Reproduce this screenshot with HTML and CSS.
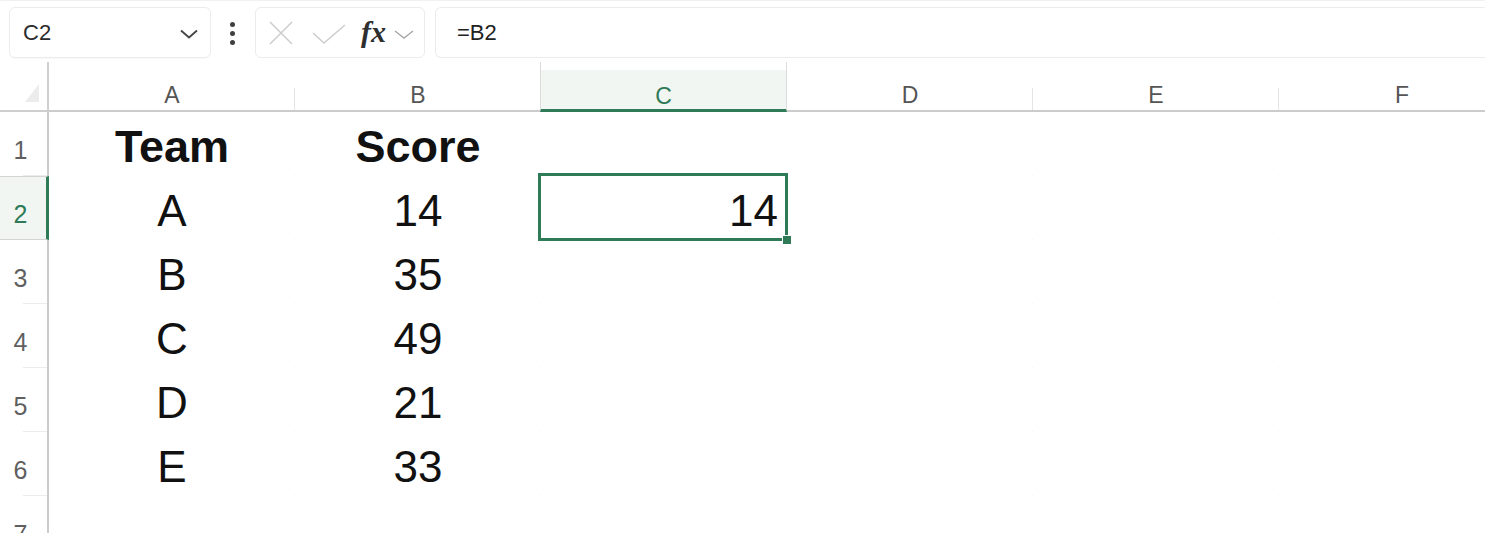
FILE: index.html
```html
<!DOCTYPE html>
<html lang="en">
<head>
<meta charset="utf-8">
<title>Sheet</title>
<link rel="stylesheet" href="styles.css">
</head>
<body>
<div class="app">
  <div class="toolbar">
    <div class="namebox">
      <span class="name">C2</span>
      <svg class="chev" width="18" height="10" viewBox="0 0 18 10"><path d="M1 1.5 L9 8.5 L17 1.5" fill="none" stroke="#444" stroke-width="1.8"/></svg>
    </div>
    <div class="more"><span class="dot"></span><span class="dot"></span><span class="dot"></span></div>
    <div class="fbtns">
      <svg class="ico-x" width="24" height="24" viewBox="0 0 24 24"><path d="M1 1 L23 23 M23 1 L1 23" fill="none" stroke="#cdcdcd" stroke-width="1.5"/></svg>
      <svg class="ico-check" width="34" height="20" viewBox="0 0 34 20"><path d="M1 9 L12 19 L33 1" fill="none" stroke="#cdcdcd" stroke-width="1.5"/></svg>
      <span class="fx">fx</span>
      <svg class="chev-s" width="20" height="9" viewBox="0 0 20 9"><path d="M1 1 L10 8 L19 1" fill="none" stroke="#a8a8a8" stroke-width="1.4"/></svg>
    </div>
    <div class="formula">=B2</div>
  </div>

  <div class="grid">
    <div class="corner"><span class="tri"></span></div>
    <div class="ch">A</div>
    <div class="ch">B</div>
    <div class="ch ch-sel">C</div>
    <div class="ch">D</div>
    <div class="ch">E</div>
    <div class="ch">F</div>

    <div class="rh">1</div>
    <div class="c c-b">Team</div>
    <div class="c c-b">Score</div>
    <div class="c"></div><div class="c"></div><div class="c"></div><div class="c"></div>

    <div class="rh rh-sel">2</div>
    <div class="c">A</div>
    <div class="c">14</div>
    <div class="c c-r active">14<span class="sel"><span class="handle"></span></span></div>
    <div class="c"></div><div class="c"></div><div class="c"></div>

    <div class="rh">3</div>
    <div class="c">B</div>
    <div class="c">35</div>
    <div class="c"></div><div class="c"></div><div class="c"></div><div class="c"></div>

    <div class="rh">4</div>
    <div class="c">C</div>
    <div class="c">49</div>
    <div class="c"></div><div class="c"></div><div class="c"></div><div class="c"></div>

    <div class="rh">5</div>
    <div class="c">D</div>
    <div class="c">21</div>
    <div class="c"></div><div class="c"></div><div class="c"></div><div class="c"></div>

    <div class="rh">6</div>
    <div class="c">E</div>
    <div class="c">33</div>
    <div class="c"></div><div class="c"></div><div class="c"></div><div class="c"></div>

    <div class="rh">7</div>
    <div class="c"></div><div class="c"></div><div class="c"></div><div class="c"></div><div class="c"></div><div class="c"></div>
  </div>
</div>
</body>
</html>
```

FILE: styles.css
```css
html, body {
  margin: 0;
  padding: 0;
  background: #ffffff;
  overflow: hidden;
}
body {
  width: 1485px;
  height: 533px;
  font-family: "Liberation Sans", Arial, sans-serif;
}
.app {
  width: 1485px;
  height: 533px;
  overflow: hidden;
}

/* toolbar */
.toolbar {
  height: 62px;
  box-sizing: border-box;
  padding: 7px 0 0 9px;
  display: flex;
  align-items: flex-start;
  border-top: 1px solid #f3f0f1;
}
.namebox {
  width: 202px;
  height: 51px;
  box-sizing: border-box;
  border: 1px solid #ececec;
  border-radius: 6px;
  display: flex;
  align-items: center;
  padding-left: 13px;
  margin-top: -1px;
  box-shadow: 0 1px 1px rgba(0,0,0,0.03);
}
.name {
  font-size: 22px;
  color: #2b2b2b;
  flex: 1;
}
.chev {
  margin-right: 12px;
  margin-top: 2px;
}
.more {
  width: 42px;
  height: 50px;
  display: flex;
  flex-direction: column;
  align-items: center;
  justify-content: center;
  gap: 4px;
}
.dot {
  width: 5px;
  height: 5px;
  border-radius: 50%;
  background: #3f3f3f;
}
.fbtns {
  width: 170px;
  height: 51px;
  box-sizing: border-box;
  border: 1px solid #ececec;
  border-radius: 6px;
  display: flex;
  align-items: center;
  padding-left: 13px;
  margin-top: -1px;
  margin-left: 2px;
}
.ico-x { margin-right: 19px; }
.ico-check { margin-right: 15px; margin-top: 2px; }
.fx {
  font-family: "Liberation Serif", "Times New Roman", serif;
  font-style: italic;
  font-weight: bold;
  font-size: 30px;
  color: #2e2e2e;
  margin-right: 8px;
  line-height: 1;
  margin-top: -2px;
}
.chev-s { margin-top: 3px; }
.formula {
  flex: 1;
  height: 51px;
  box-sizing: border-box;
  margin-left: 10px;
  margin-top: -1px;
  border: 1px solid #ececec;
  border-right: none;
  border-radius: 6px 0 0 6px;
  font-size: 22px;
  color: #222222;
  padding-left: 21px;
  display: flex;
  align-items: center;
}

/* grid */
.grid {
  display: grid;
  grid-template-columns: 49px repeat(6, 246px);
  grid-template-rows: 50px repeat(7, 64px);
}
.corner {
  box-sizing: border-box;
  border-right: 2px solid #cfcfcf;
  border-bottom: 2px solid #cfcfcf;
  display: flex;
  align-items: flex-end;
  justify-content: flex-end;
  padding: 0 8px 8px 0;
}
.tri {
  width: 0;
  height: 0;
  border-left: 14px solid transparent;
  border-bottom: 18px solid #ececec;
}
.ch {
  box-sizing: border-box;
  border-bottom: 2px solid #cccccc;
  font-size: 23px;
  line-height: 26px;
  padding-top: 20px;
  text-align: center;
  color: #555555;
  background: linear-gradient(#e4e4e4, #e4e4e4) right bottom / 1px 22px no-repeat;
}
.ch-sel {
  background: linear-gradient(#ffffff, #ffffff) left top / 100% 8px no-repeat, #f2f6f3;
  color: #2f7a57;
  border-left: 1px solid #dcdcdc;
  border-right: 1px solid #dcdcdc;
  border-bottom: 3px solid #2f7a57;
  padding-top: 21px;
  margin-left: -1px;
}
.rh {
  box-sizing: border-box;
  border-right: 2px solid #cccccc;
  font-size: 25px;
  line-height: 29px;
  padding-top: 24px;
  padding-right: 6px;
  text-align: center;
  color: #5f5f5f;
  background: linear-gradient(#ececec, #ececec) left 23px bottom / 26px 1px no-repeat;
}
.rh-sel {
  background: #f2f6f3;
  color: #2f7a57;
  border-right: 3px solid #2f7a57;
  border-top: 1px solid #d4d4d4;
  border-bottom: 1px solid #d4d4d4;
  padding-top: 23px;
  padding-right: 5px;
}
.c {
  box-sizing: border-box;
  font-size: 44px;
  line-height: 58px;
  padding-top: 6px;
  text-align: center;
  color: #111111;
  white-space: nowrap;
  background:
    linear-gradient(#f4f4f4, #f4f4f4) right bottom / 1px 1px no-repeat;
}
.c-b {
  font-weight: bold;
  font-size: 45px;
}
.c-r {
  text-align: right;
  padding-right: 9px;
}
.active {
  position: relative;
}
.sel {
  position: absolute;
  top: -3px;
  left: -3px;
  right: -1px;
  bottom: -1px;
  border: 3px solid #2f7a57;
  pointer-events: none;
}
.handle {
  position: absolute;
  right: -7px;
  bottom: -7px;
  width: 8px;
  height: 8px;
  background: #2f7a57;
  border: 1px solid #ffffff;
}
```
